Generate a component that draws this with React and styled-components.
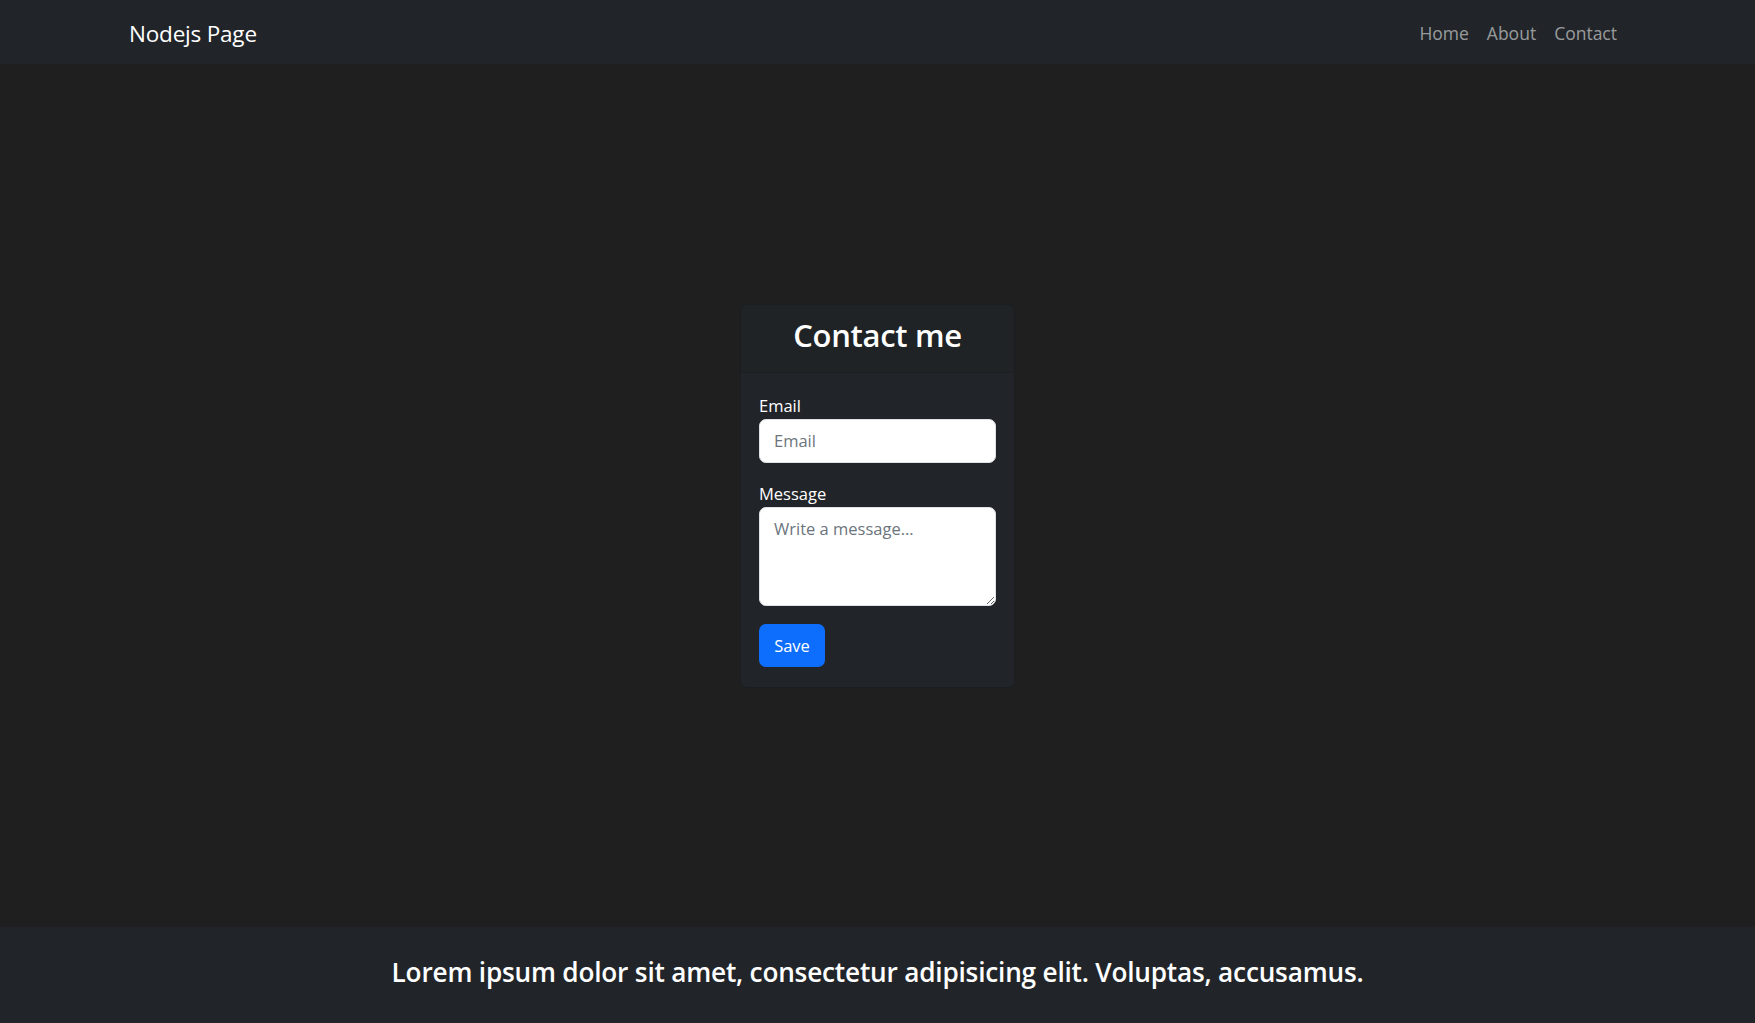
import React from "react";
import styled, { createGlobalStyle } from "styled-components";

const Global = createGlobalStyle`
  html, body { margin: 0; padding: 0; }
  body {
    background: #1f1f1f;
    font-family: "Open Sans", "Noto Sans", "Liberation Sans", sans-serif;
    color: #dee2e6;
  }
  * { box-sizing: border-box; }
`;

const Page = styled.div`
  min-height: 100vh;
  display: flex;
  flex-direction: column;
`;

const NavBar = styled.nav`
  height: 64px;
  background: #212529;
  display: flex;
  align-items: center;
  justify-content: space-between;
  padding: 2px 138px 0 129px;
`;

const Brand = styled.a`
  color: #ffffff;
  font-size: 22.5px;
  text-decoration: none;
  letter-spacing: -0.2px;
`;

const NavLinks = styled.div`
  display: flex;
  gap: 18px;
`;

const NavLink = styled.a`
  color: rgba(255, 255, 255, 0.55);
  font-size: 17.5px;
  text-decoration: none;
`;

const Main = styled.main`
  flex: 1;
  display: flex;
  align-items: center;
  justify-content: center;
`;

const Card = styled.div`
  width: 275px;
  background: #212529;
  border: 1px solid rgba(0, 0, 0, 0.175);
  border-radius: 7px;
  overflow: hidden;
`;

const CardHeader = styled.div`
  height: 68px;
  display: flex;
  align-items: center;
  justify-content: center;
  padding-bottom: 7px;
  background: rgba(0, 0, 0, 0.05);
  border-bottom: 1px solid rgba(0, 0, 0, 0.1);
`;

const Title = styled.h2`
  margin: 0;
  color: #ffffff;
  font-size: 31px;
  font-weight: 600;
  letter-spacing: -0.3px;
`;

const CardBody = styled.form`
  padding: 20px 18px 20px 18px;
  display: flex;
  flex-direction: column;
`;

const Field = styled.div`
  display: flex;
  flex-direction: column;
  margin-bottom: ${(p) => p.$mb || 0}px;
`;

const Label = styled.label`
  color: #ffffff;
  font-size: 16.5px;
  line-height: 25px;
  margin-bottom: 1px;
`;

const inputBase = `
  width: 100%;
  background: #ffffff;
  border: 1px solid #dee2e6;
  border-radius: 7px;
  font-family: "Open Sans", "Noto Sans", "Liberation Sans", sans-serif;
  font-size: 16.5px;
  color: #212529;
  padding: 0 14px;
  outline: none;
  &::placeholder { color: #6c757d; opacity: 1; }
`;

const Input = styled.input`
  ${inputBase}
  height: 44px;
`;

const TextArea = styled.textarea`
  ${inputBase}
  height: 99px;
  padding-top: 9px;
  line-height: 1.5;
  resize: vertical;
  display: block;
`;

const SaveButton = styled.button`
  align-self: flex-start;
  margin-top: 18px;
  width: 66px;
  height: 43px;
  background: #0d6efd;
  color: #ffffff;
  border: none;
  border-radius: 7px;
  font-family: "Open Sans", "Noto Sans", "Liberation Sans", sans-serif;
  font-size: 16.5px;
  cursor: pointer;
`;

const Footer = styled.footer`
  height: 96px;
  background: #212529;
  display: flex;
  align-items: center;
  justify-content: center;
  padding-bottom: 6px;
`;

const FooterText = styled.h5`
  margin: 0;
  color: #ffffff;
  font-size: 26.2px;
  font-weight: 600;
  letter-spacing: -0.2px;
`;

export default function App() {
  return (
    <>
      <Global />
      <Page>
        <NavBar>
          <Brand href="#">Nodejs Page</Brand>
          <NavLinks>
            <NavLink href="#">Home</NavLink>
            <NavLink href="#">About</NavLink>
            <NavLink href="#">Contact</NavLink>
          </NavLinks>
        </NavBar>
        <Main>
          <Card>
            <CardHeader>
              <Title>Contact me</Title>
            </CardHeader>
            <CardBody onSubmit={(e) => e.preventDefault()}>
              <Field $mb={18}>
                <Label htmlFor="email">Email</Label>
                <Input id="email" type="email" placeholder="Email" />
              </Field>
              <Field>
                <Label htmlFor="message">Message</Label>
                <TextArea id="message" placeholder="Write a message..." />
              </Field>
              <SaveButton type="submit">Save</SaveButton>
            </CardBody>
          </Card>
        </Main>
        <Footer>
          <FooterText>
            Lorem ipsum dolor sit amet, consectetur adipisicing elit. Voluptas, accusamus.
          </FooterText>
        </Footer>
      </Page>
    </>
  );
}
